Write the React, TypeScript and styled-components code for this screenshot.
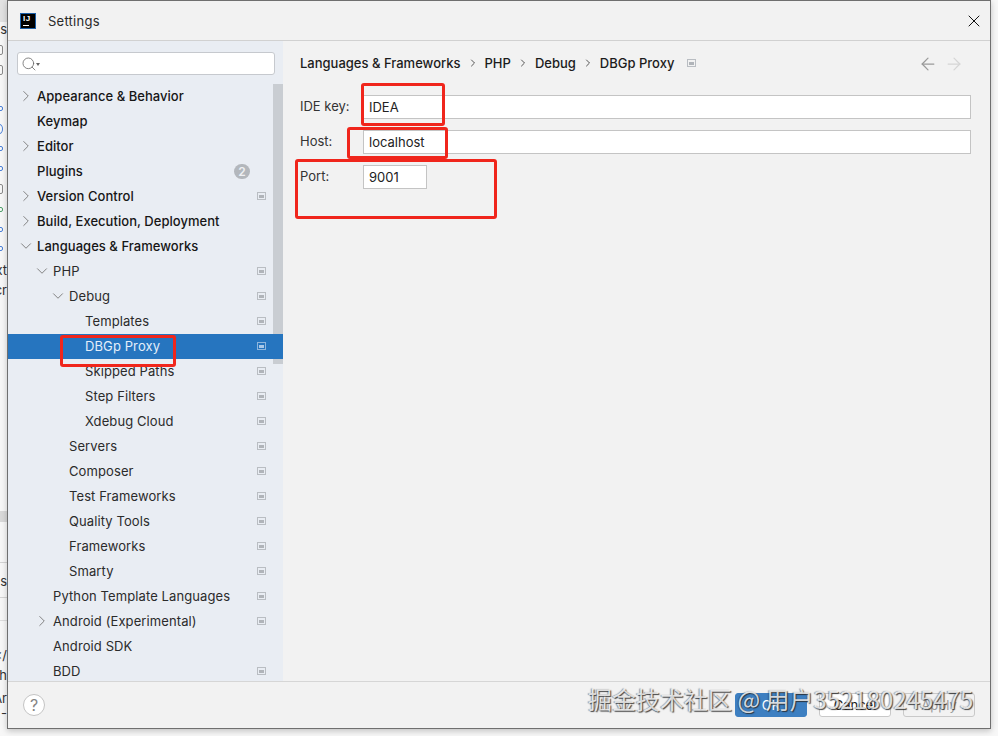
import React from 'react';
import styled, { createGlobalStyle } from 'styled-components';
import { ArrowLeft, ArrowRight, ChevronDown, ChevronRight, Search, X } from 'lucide-react';

const GlobalStyle = createGlobalStyle`
	html, body {
		margin: 0;
		padding: 0;
		background: #fff;
	}
	body {
		width: 998px;
		height: 736px;
		overflow: hidden;
		font-family: Inter, 'Liberation Sans', sans-serif;
		color: #1c1c1c;
	}
`;

const Page = styled.div`
	position: relative;
	width: 998px;
	height: 736px;
	overflow: hidden;
	background: #f7f7f7;
`;

const Window = styled.div`
	box-sizing: border-box;
	margin-left: 7px;
	width: 984px;
	height: 729px;
	border: 1px solid #6f6f6f;
	background: #f2f2f2;
	display: flex;
	flex-direction: column;
	box-shadow: 0 2px 6px rgba(0, 0, 0, 0.22);
	position: relative;
`;

const TitleBar = styled.div`
	height: 40px;
	flex: none;
	box-sizing: border-box;
	border-bottom: 1px solid #d1d1d1;
	display: flex;
	align-items: center;
	padding: 0 6px 0 12px;
	gap: 12px;
`;

const Logo = styled.div`
	width: 16px;
	height: 16px;
	box-sizing: border-box;
	background: #000;
	border: 1px solid #1c5fa8;
	position: relative;
	color: #fff;
	font-family: 'Liberation Sans', sans-serif;
	font-size: 8px;
	font-weight: 700;
	line-height: 10px;
	padding-left: 2px;
	letter-spacing: 0.5px;
	&::after {
		content: '';
		position: absolute;
		left: 2px;
		bottom: 2px;
		width: 6px;
		height: 1px;
		background: #fff;
	}
`;

const TitleText = styled.span`
	font-size: 13px;
	flex: 1;
	color: #2a2a2a;
	letter-spacing: 0.25px;
`;

const Body = styled.div`
	flex: 1;
	min-height: 0;
	display: flex;
`;

const Sidebar = styled.div`
	width: 275px;
	flex: none;
	background: #e9edf3;
	display: flex;
	flex-direction: column;
`;

const SearchBox = styled.div`
	box-sizing: border-box;
	height: 23px;
	margin: 11px 8px 9px 9px;
	background: #fff;
	border: 1px solid #c6c9ce;
	border-radius: 3px;
	display: flex;
	align-items: center;
	padding-left: 3px;
	color: #666;
	flex: none;
`;

const Caret = styled.span`
	width: 0;
	height: 0;
	margin-left: -1px;
	margin-top: 2px;
	border-left: 2.5px solid transparent;
	border-right: 2.5px solid transparent;
	border-top: 3px solid #666;
`;

const TreeArea = styled.div`
	flex: 1;
	min-height: 0;
	overflow: hidden;
	position: relative;
`;

const Scrollbar = styled.div`
	position: absolute;
	top: 0;
	right: 0;
	width: 10px;
	height: 280px;
	background: #c9cdd2;
`;

const Row = styled.div<{ $selected?: boolean; $level: number }>`
	box-sizing: border-box;
	height: 25px;
	padding-bottom: 1px;
	display: flex;
	align-items: center;
	position: relative;
	padding-left: ${(p) => 29 + p.$level * 16}px;
	font-size: 13px;
	font-weight: ${(p) => (p.$level === 0 ? 500 : 400)};
	letter-spacing: ${(p) => (p.$level === 0 ? '0.04px' : '0.1px')};
	background: ${(p) => (p.$selected ? '#2675bf' : 'transparent')};
	color: ${(p) => (p.$selected ? '#e3eefa' : p.$level === 0 ? '#161616' : '#2b2b2b')};
	z-index: ${(p) => (p.$selected ? 1 : 0)};
`;

const Arrow = styled.span`
	position: absolute;
	margin-left: -20px;
	display: flex;
	color: #808080;
`;

const Badge = styled.span`
	position: absolute;
	left: 226px;
	width: 16px;
	height: 15px;
	border-radius: 8px;
	background: #b3b7bc;
	color: #eef0f3;
	font-size: 12px;
	font-weight: 600;
	line-height: 15px;
	text-align: center;
`;

const ProjectMark = styled.span<{ $light?: boolean }>`
	position: absolute;
	left: 249px;
	width: 9px;
	height: 8px;
	box-sizing: border-box;
	border: 1px solid ${(p) => (p.$light ? '#8fb6dd' : '#b9bdc2')};
	display: flex;
	align-items: center;
	justify-content: center;
	&::after {
		content: '';
		display: block;
		width: 5px;
		height: 3px;
		background: ${(p) => (p.$light ? '#a9c8e8' : '#b0b4b9')};
	}
`;

const CrumbMark = styled(ProjectMark)`
	position: static;
	margin-left: 13px;
`;

const Content = styled.div`
	flex: 1;
	min-width: 0;
	display: flex;
	flex-direction: column;
	padding: 0 19px 0 17px;
`;

const Breadcrumbs = styled.div`
	height: 44px;
	flex: none;
	display: flex;
	align-items: center;
	font-size: 13px;
	font-weight: 500;
	color: #1c1c1c;
`;

const CrumbSep = styled.span`
	display: flex;
	margin: 0 6px;
	color: #444;
`;

const NavArrows = styled.div`
	margin-left: auto;
	display: flex;
	gap: 6px;
	margin-right: 7px;
	margin-top: 2px;
`;

const Form = styled.div`
	display: grid;
	grid-template-columns: 63px 1fr;
	row-gap: 11px;
	align-items: center;
	margin-top: 10px;
	font-size: 13px;
	color: #333;
`;

const FieldLabel = styled.span`
	padding-bottom: 2px;
`;

const Field = styled.div<{ $short?: boolean }>`
	box-sizing: border-box;
	height: 24px;
	width: ${(p) => (p.$short ? '64px' : '100%')};
	background: #fff;
	border: 1px solid #c4c4c4;
	display: flex;
	align-items: center;
	padding: 0 0 1px 5px;
	color: #222;
`;

const Footer = styled.div`
	height: 47px;
	flex: none;
	box-sizing: border-box;
	border-top: 1px solid #d6d6d6;
	display: flex;
	align-items: center;
	padding: 0 15px 0 15px;
	margin-top: -1px;
`;

const HelpButton = styled.div`
	width: 22px;
	height: 22px;
	box-sizing: border-box;
	border-radius: 50%;
	background: #fff;
	border: 1px solid #c4c4c4;
	color: #858585;
	font-size: 16px;
	display: flex;
	align-items: center;
	justify-content: center;
`;

const ButtonRow = styled.div`
	margin-left: auto;
	display: flex;
	gap: 12px;
`;

const Button = styled.div<{ $primary?: boolean; $disabled?: boolean }>`
	box-sizing: border-box;
	width: 72px;
	height: 24px;
	border-radius: 3px;
	font-size: 13px;
	display: flex;
	align-items: center;
	justify-content: center;
	background: ${(p) => (p.$primary ? '#3d7fc1' : p.$disabled ? '#f2f2f2' : '#fff')};
	border: 1px solid ${(p) => (p.$primary ? '#3d7fc1' : '#c9c9c9')};
	color: ${(p) => (p.$primary ? '#fff' : p.$disabled ? '#9a9a9a' : '#222')};
`;

const Annotation = styled.div<{ $x: number; $y: number; $w: number; $h: number }>`
	position: absolute;
	left: ${(p) => p.$x}px;
	top: ${(p) => p.$y}px;
	width: ${(p) => p.$w}px;
	height: ${(p) => p.$h}px;
	box-sizing: border-box;
	border: 3px solid #f0261c;
	border-radius: 3px;
	z-index: 5;
`;

const Watermark = styled.div`
	position: absolute;
	left: 588px;
	top: 684px;
	z-index: 6;
	font-family: 'Noto Sans CJK SC', 'Liberation Sans', sans-serif;
	font-size: 24px;
	line-height: 30px;
	white-space: nowrap;
	color: rgba(255, 255, 255, 0.78);
	text-shadow: 1px 1px 1px rgba(40, 40, 40, 0.85), -1px 0 1px rgba(40, 40, 40, 0.45);
`;

/* bits of the IDE behind the dialog, only a few pixels of it stick out on the left */
const Band = styled.div<{ $y: number; $h: number; $bg: string }>`
	position: absolute;
	left: 0;
	top: ${(p) => p.$y}px;
	width: 7px;
	height: ${(p) => p.$h}px;
	background: ${(p) => p.$bg};
`;

const Peek = styled.div<{ $y: number; $h: number; $color: string; $round?: boolean }>`
	position: absolute;
	left: -4px;
	top: ${(p) => p.$y}px;
	width: 7px;
	height: ${(p) => p.$h}px;
	box-sizing: border-box;
	border: 1.5px solid ${(p) => p.$color};
	border-radius: ${(p) => (p.$round ? '50%' : '2px')};
`;

const PeekText = styled.div<{ $y: number }>`
	position: absolute;
	left: -13px;
	width: 20px;
	top: ${(p) => p.$y}px;
	display: flex;
	justify-content: flex-end;
	font-size: 13px;
	line-height: 16px;
	white-space: nowrap;
	color: #333;
`;

type Item = { label: string; level: number; arrow?: 'right' | 'down'; mark?: boolean; selected?: boolean; badge?: string };

const items: Item[] = [
	{ label: 'Appearance & Behavior', level: 0, arrow: 'right' },
	{ label: 'Keymap', level: 0 },
	{ label: 'Editor', level: 0, arrow: 'right' },
	{ label: 'Plugins', level: 0, badge: '2' },
	{ label: 'Version Control', level: 0, arrow: 'right', mark: true },
	{ label: 'Build, Execution, Deployment', level: 0, arrow: 'right' },
	{ label: 'Languages & Frameworks', level: 0, arrow: 'down' },
	{ label: 'PHP', level: 1, arrow: 'down', mark: true },
	{ label: 'Debug', level: 2, arrow: 'down', mark: true },
	{ label: 'Templates', level: 3, mark: true },
	{ label: 'DBGp Proxy', level: 3, mark: true, selected: true },
	{ label: 'Skipped Paths', level: 3, mark: true },
	{ label: 'Step Filters', level: 3, mark: true },
	{ label: 'Xdebug Cloud', level: 3, mark: true },
	{ label: 'Servers', level: 2, mark: true },
	{ label: 'Composer', level: 2, mark: true },
	{ label: 'Test Frameworks', level: 2, mark: true },
	{ label: 'Quality Tools', level: 2, mark: true },
	{ label: 'Frameworks', level: 2, mark: true },
	{ label: 'Smarty', level: 2, mark: true },
	{ label: 'Python Template Languages', level: 1, mark: true },
	{ label: 'Android (Experimental)', level: 1, arrow: 'right', mark: true },
	{ label: 'Android SDK', level: 1 },
	{ label: 'BDD', level: 1, mark: true },
];

const crumbs = ['Languages & Frameworks', 'PHP', 'Debug', 'DBGp Proxy'];

export default function App() {
	return (
		<Page>
			<GlobalStyle />
			<Band $y={0} $h={22} $bg="#e2e2e2" />
			<Band $y={511} $h={11} $bg="#d9d9d9" />
			<Band $y={562} $h={1} $bg="#d4d4d4" />
			<Band $y={597} $h={1} $bg="#d4d4d4" />
			<Band $y={620} $h={1} $bg="#dddddd" />
			<Peek $y={45} $h={10} $color="#8a8a8a" />
			<Peek $y={65} $h={10} $color="#8a8a8a" />
			<Peek $y={106} $h={5} $color="#4a80d8" />
			<Peek $y={124} $h={10} $color="#4a80d8" $round />
			<Peek $y={146} $h={5} $color="#4a80d8" />
			<Peek $y={166} $h={5} $color="#4a80d8" />
			<Peek $y={184} $h={10} $color="#8a8a8a" />
			<Peek $y={207} $h={5} $color="#4fa06a" />
			<Peek $y={227} $h={5} $color="#4a80d8" />
			<Peek $y={246} $h={5} $color="#4a80d8" />
			<PeekText $y={21}>es</PeekText>
			<PeekText $y={262}>xt</PeekText>
			<PeekText $y={282}>cr</PeekText>
			<PeekText $y={573}>ds</PeekText>
			<PeekText $y={647}>&lt;/</PeekText>
			<PeekText $y={667}>&lt;h</PeekText>
			<PeekText $y={690}>Ar</PeekText>
			<PeekText $y={705}>-</PeekText>
			<Window>
				<TitleBar>
					<Logo>IJ</Logo>
					<TitleText>Settings</TitleText>
					<X size={20} strokeWidth={1.2} color="#111" />
				</TitleBar>
				<Body>
					<Sidebar>
						<SearchBox>
							<Search size={16} strokeWidth={1.2} />
							<Caret />
						</SearchBox>
						<TreeArea>
							<Scrollbar />
							{items.map((item) => (
								<Row key={item.label} $level={item.level} $selected={item.selected}>
									{item.arrow && (
										<Arrow>
											{item.arrow === 'right' ? (
												<ChevronRight size={18} strokeWidth={1.3} />
											) : (
												<ChevronDown size={18} strokeWidth={1.3} />
											)}
										</Arrow>
									)}
									{item.label}
									{item.badge && <Badge>{item.badge}</Badge>}
									{item.mark && <ProjectMark $light={item.selected} />}
								</Row>
							))}
						</TreeArea>
					</Sidebar>
					<Content>
						<Breadcrumbs>
							{crumbs.map((crumb, i) => (
								<React.Fragment key={crumb}>
									{i > 0 && (
										<CrumbSep>
											<ChevronRight size={12} strokeWidth={1.8} />
										</CrumbSep>
									)}
									{crumb}
								</React.Fragment>
							))}
							<CrumbMark />
							<NavArrows>
								<ArrowLeft size={20} strokeWidth={1.5} color="#9a9a9a" />
								<ArrowRight size={20} strokeWidth={1.5} color="#d5d5d5" />
							</NavArrows>
						</Breadcrumbs>
						<Form>
							<FieldLabel>IDE key:</FieldLabel>
							<Field>IDEA</Field>
							<FieldLabel>Host:</FieldLabel>
							<Field>localhost</Field>
							<FieldLabel>Port:</FieldLabel>
							<Field $short>9001</Field>
						</Form>
					</Content>
				</Body>
				<Footer>
					<HelpButton>?</HelpButton>
					<ButtonRow>
						<Button $primary>OK</Button>
						<Button>Cancel</Button>
						<Button $disabled>Apply</Button>
					</ButtonRow>
				</Footer>
			</Window>
			<Annotation $x={361} $y={83} $w={84} $h={43} />
			<Annotation $x={347} $y={127} $w={101} $h={32} />
			<Annotation $x={295} $y={159} $w={202} $h={60} />
			<Annotation $x={60} $y={335} $w={116} $h={32} />
			<Watermark>掘金技术社区 @ 用户352180245475</Watermark>
		</Page>
	);
}
